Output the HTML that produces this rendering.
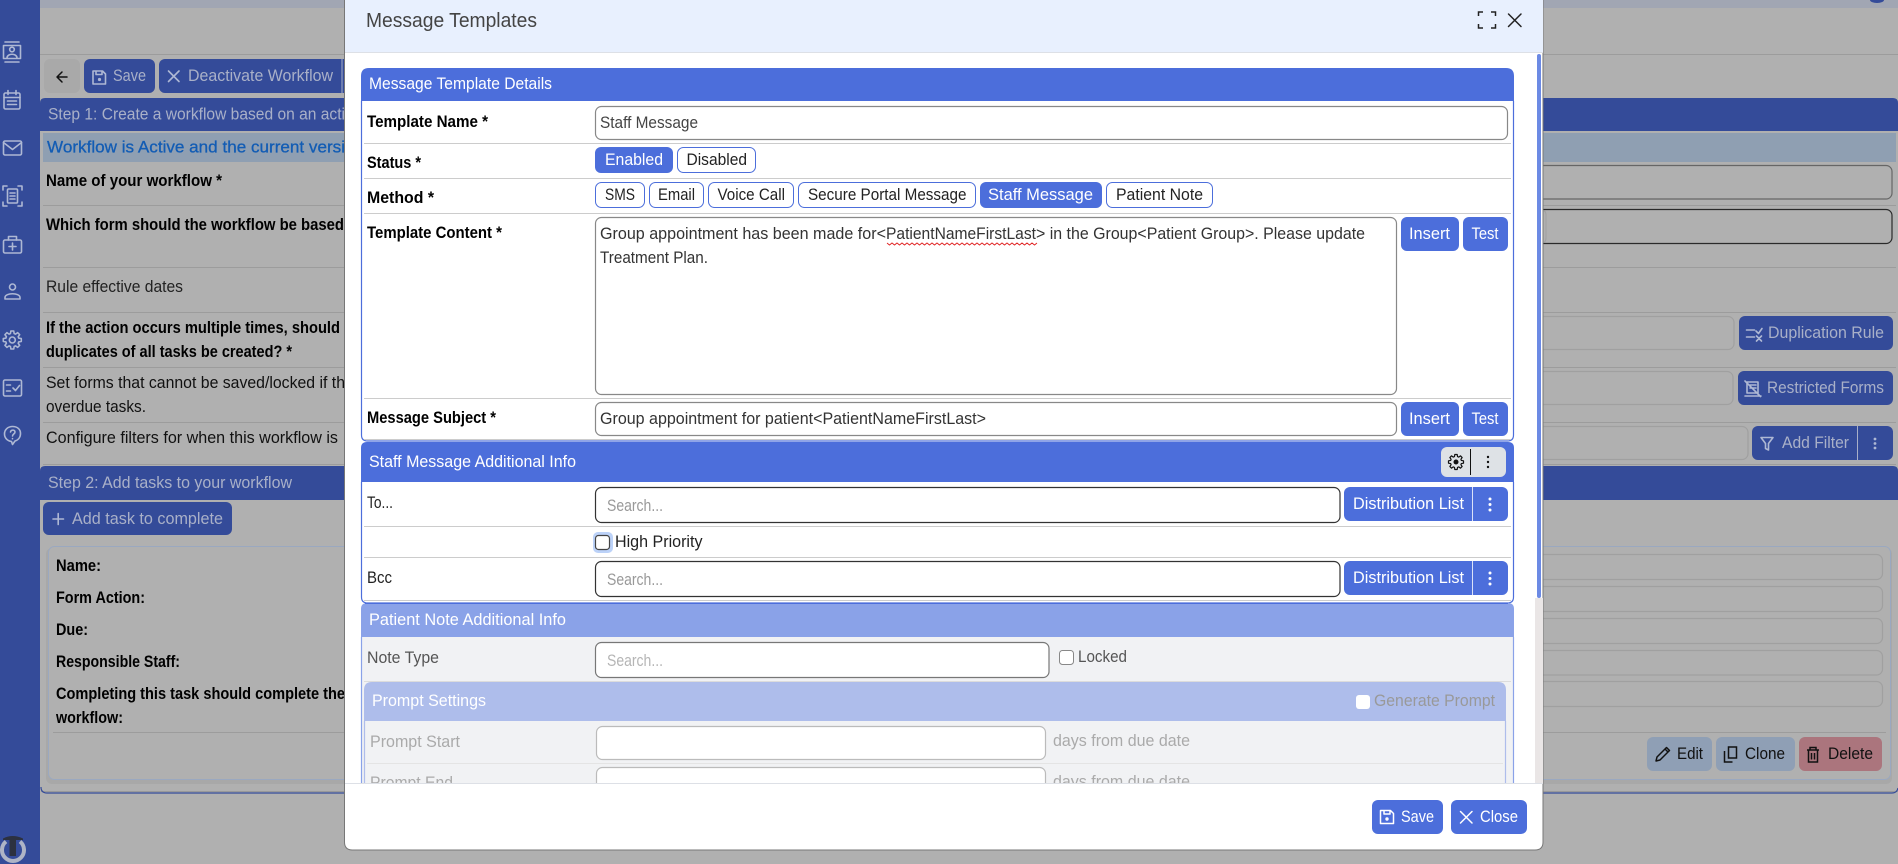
<!DOCTYPE html>
<html lang="en"><head><meta charset="utf-8"><title>Message Templates</title>
<style>
html,body{margin:0;padding:0;width:1898px;height:864px;overflow:hidden;background:#b0b0b0}
svg{display:block}
text{font-family:"Liberation Sans",Arial,sans-serif;font-size:17px;white-space:pre}
.b{font-weight:700;fill:#000}
.w{fill:#fff}
.d{fill:#a9b0c8}
.i{fill:none;stroke:#aeb8d4;stroke-width:1.6;stroke-linecap:round;stroke-linejoin:round}
.l{fill:none;stroke:#9c9c9c;stroke-width:1}
.f{fill:none;stroke:#a0a0a0;stroke-width:1.2}
.x{fill:none;stroke:#fff;stroke-width:1.5;stroke-linecap:round;stroke-linejoin:round}
</style></head><body>
<svg xmlns="http://www.w3.org/2000/svg" width="1898" height="864" viewBox="0 0 1898 864">
<defs>
<clipPath id="mb"><rect x="345" y="52" width="1190" height="731"/></clipPath>
<path id="gear" d="M5.38-1.54L7.51-1.19 7.51 1.19 5.38 1.54 4.90 2.71 6.15 4.47 4.47 6.15 2.71 4.90 1.54 5.38 1.19 7.51-1.19 7.51-1.54 5.38-2.71 4.90-4.47 6.15-6.15 4.47-4.90 2.71-5.38 1.54-7.51 1.19-7.51-1.19-5.38-1.54-4.90-2.71-6.15-4.47-4.47-6.15-2.71-4.90-1.54-5.38-1.19-7.51 1.19-7.51 1.54-5.38 2.71-4.90 4.47-6.15 6.15-4.47 4.90-2.71Z"/>
</defs>

<!-- page background -->
<rect width="1898" height="864" fill="#b0b0b0"/>
<rect width="1898" height="8" fill="#a1a6b3"/>
<path d="M1870 0a7 3 0 0 0 14 0z" fill="#344b99"/>
<path class="l" d="M40 54.5H1898"/>

<!-- sidebar -->
<rect width="40" height="864" fill="#344b99"/>
<g class="i">
<path d="M5 42h14M3.5 45.5h17v13h-17zM5 62h14"/><circle cx="12" cy="49.5" r="2.3"/><path d="M7 58c0-5 10-5 10 0"/>
<rect x="4" y="93" width="16" height="16" rx="1.5"/><path d="M4 97.5h16M8 90.5v4M16 90.5v4M7.5 101h9M7.5 104.5h9" />
<rect x="3.5" y="141" width="18" height="14" rx="1.5"/><path d="M3.5 142.5l9 7 9-7"/>
<path d="M3 190v-4h4M18 186h4v4M3 202v4h4M22 202v4h-4"/><rect x="7.5" y="189" width="10" height="14" rx="1"/><path d="M10 193h5M10 196h5M10 199h5"/>
<rect x="3.5" y="240" width="18" height="13" rx="1.5"/><path d="M8.500 240v-3.500h8v3.500M12.500 243v7M9 246.500h7"/>
<circle cx="12.500" cy="287" r="3"/><path d="M5 299v-1.500c0-5 15-5 15 0v1.500z"/>
<use href="#gear" transform="translate(12.300 340) scale(1.200)" stroke-width="1.300"/><circle cx="12.300" cy="340" r="3"/>
<rect x="3.500" y="380" width="18" height="16" rx="1.500"/><path d="M6.500 385h4M6.500 391h4M13 388l2.500 2.500 4-5"/>
<path d="M12.500 426.500c-4.500 0-8 3-8 7.500 0 4 3 7 7 7.500l1 3 2.500-3.500c3.500-1 5.500-4 5.500-7.500 0-4.500-3.500-7-8-7z"/>
<path d="M10.500 432c.5-2.500 4.500-2.500 4.500 0 0 2-2.500 2-2.500 4M12.500 438.500v.2"/>
</g>
<path d="M6 841.500a11 11 0 1 0 14 0" fill="none" stroke="#aeb4c6" stroke-width="4"/>
<path d="M3 838.500q9.500-5 20 0v1.500h-7v16h-6.500v-16H3z" fill="#2c3140"/>

<!-- top toolbar -->
<rect x="44" y="59" width="36" height="34" rx="6" fill="#a9a9a9"/>
<path d="M67 77H57.500M62 72l-5 5 5 5" fill="none" stroke="#111" stroke-width="1.500" stroke-linecap="round" stroke-linejoin="round"/>
<rect x="84" y="59" width="71" height="34" rx="6" fill="#344b99"/>
<path class="i" d="M93 71h9.500l3 3v10h-12.500zM96 71v3.500h6V71"/><circle cx="99.500" cy="79.500" r="1.600" fill="#aeb8d4" stroke="none"/>
<text class="d" x="113" y="81" textLength="33" lengthAdjust="spacingAndGlyphs">Save</text>
<rect x="159" y="59" width="200" height="34" rx="6" fill="#344b99"/>
<path class="i" d="M168.500 71l10.500 10.500M179 71l-10.500 10.500"/>
<text class="d" x="188" y="81" textLength="145" lengthAdjust="spacingAndGlyphs">Deactivate Workflow</text>
<path d="M342 59v34" stroke="#a9b0c8" stroke-width="1"/>

<!-- step 1 -->
<path d="M40 131V103q0-5 5-5H1893q5 0 5 5V131z" fill="#344b99"/>
<text class="d" x="48" y="119.500" textLength="297" lengthAdjust="spacingAndGlyphs">Step 1: Create a workflow based on an acti</text>
<rect x="43" y="133" width="1853" height="29" fill="#8f9fb2"/>
<text x="47" y="152.500" textLength="298" lengthAdjust="spacingAndGlyphs" fill="#125cb4" style="stroke:#125cb4;stroke-width:.3">Workflow is Active and the current versi</text>
<path class="l" d="M43 205.500H1896M43 267.500H1896M43 312.500H1896M43 367.500H1896M43 422.500H1896M43 464.500H1896"/>
<text class="b" x="46" y="186" textLength="176" lengthAdjust="spacingAndGlyphs">Name of your workflow *</text>
<rect x="1200" y="165.500" width="692" height="33.500" rx="6" fill="none" stroke="#666" stroke-width="1.200"/>
<text class="b" x="46" y="230" textLength="298" lengthAdjust="spacingAndGlyphs">Which form should the workflow be based</text>
<rect x="1200" y="209.500" width="692" height="34" rx="6" fill="none" stroke="#2a2a2a" stroke-width="1.200"/>
<path d="M1541 210q5 0 5 5v23q0 5-5 5" fill="none" stroke="#a0a0a0"/>
<text x="46" y="292" textLength="137" lengthAdjust="spacingAndGlyphs" fill="#222">Rule effective dates</text>
<text class="b" x="46" y="333" textLength="294" lengthAdjust="spacingAndGlyphs">If the action occurs multiple times, should</text>
<text class="b" x="46" y="357" textLength="246" lengthAdjust="spacingAndGlyphs">duplicates of all tasks be created? *</text>
<rect class="f" x="1200" y="316.500" width="534" height="33" rx="6"/>
<rect x="1739" y="316" width="154" height="34" rx="6" fill="#344b99"/>
<path class="i" d="M1746.500 330h8M1746.500 337h8M1756 331l2.500 2.500 3.500-5M1756.500 336l5 5M1761.500 336l-5 5"/>
<text class="d" x="1768" y="338" textLength="116" lengthAdjust="spacingAndGlyphs">Duplication Rule</text>
<text x="46" y="388" textLength="299" lengthAdjust="spacingAndGlyphs" fill="#111">Set forms that cannot be saved/locked if th</text>
<text x="46" y="412" textLength="100" lengthAdjust="spacingAndGlyphs" fill="#111">overdue tasks.</text>
<rect class="f" x="1200" y="371.500" width="533" height="33" rx="6"/>
<rect x="1738" y="371" width="155" height="34" rx="6" fill="#344b99"/>
<path class="i" d="M1747 382h11v11h-11zM1745 381l15.500 15.500M1745 396h16M1750 385h6M1750 388h6"/>
<text class="d" x="1767" y="393" textLength="117" lengthAdjust="spacingAndGlyphs">Restricted Forms</text>
<text x="46" y="443" textLength="292" lengthAdjust="spacingAndGlyphs" fill="#111">Configure filters for when this workflow is</text>
<rect class="f" x="1200" y="426.500" width="548" height="33" rx="6"/>
<rect x="1752" y="426" width="141" height="34" rx="6" fill="#344b99"/>
<path class="i" d="M1761 437.500h12l-4.500 6v6.500l-3-1.500v-5z"/>
<text class="d" x="1782" y="448" textLength="67" lengthAdjust="spacingAndGlyphs">Add Filter</text>
<path d="M1857.500 426v34" stroke="#a9b0c8"/>
<g fill="#aeb8d4"><circle cx="1875" cy="439" r="1.400"/><circle cx="1875" cy="443.500" r="1.400"/><circle cx="1875" cy="448" r="1.400"/></g>

<!-- step 2 -->
<path d="M40 500V471q0-5 5-5H1893q5 0 5 5V500z" fill="#344b99"/>
<text class="d" x="48" y="488" textLength="244" lengthAdjust="spacingAndGlyphs">Step 2: Add tasks to your workflow</text>
<rect x="43" y="502" width="189" height="33" rx="6" fill="#344b99"/>
<path class="i" d="M53 519h10.500M58.200 513.500v11"/>
<text class="d" x="72" y="524" textLength="151" lengthAdjust="spacingAndGlyphs">Add task to complete</text>
<rect x="46" y="548" width="1846" height="236" rx="6" fill="#a8a8a8"/>
<rect x="48.500" y="546.500" width="1842" height="233" rx="6" fill="#b0b0b0" stroke="#9aa8c0"/>
<text class="b" x="56" y="571" textLength="45" lengthAdjust="spacingAndGlyphs">Name:</text>
<text class="b" x="56" y="603" textLength="89" lengthAdjust="spacingAndGlyphs">Form Action:</text>
<text class="b" x="56" y="635" textLength="32" lengthAdjust="spacingAndGlyphs">Due:</text>
<text class="b" x="56" y="667" textLength="124" lengthAdjust="spacingAndGlyphs">Responsible Staff:</text>
<text class="b" x="56" y="699" textLength="289" lengthAdjust="spacingAndGlyphs">Completing this task should complete the</text>
<text class="b" x="56" y="723" textLength="67" lengthAdjust="spacingAndGlyphs">workflow:</text>
<g class="f"><rect x="1200" y="554.500" width="682.500" height="25" rx="6"/><rect x="1200" y="586.500" width="682.500" height="25" rx="6"/><rect x="1200" y="618.500" width="682.500" height="25" rx="6"/><rect x="1200" y="650.500" width="682.500" height="24.500" rx="6"/><rect x="1200" y="681.500" width="682.500" height="25" rx="6"/></g>
<path class="l" d="M53 732.500H1886"/>
<rect x="1647" y="737" width="65" height="34" rx="6" fill="#8f9fb5"/>
<path d="M1656 761l1-4 9.500-9.500 3 3-9.500 9.500zM1665 749l3 3" fill="none" stroke="#111" stroke-width="1.500" stroke-linejoin="round"/>
<text x="1677" y="759" textLength="26" lengthAdjust="spacingAndGlyphs" fill="#111">Edit</text>
<rect x="1716" y="737" width="79" height="34" rx="6" fill="#8f9fb5"/>
<path d="M1728.500 747h8v11h-8zM1724.500 751v11h8" fill="none" stroke="#111" stroke-width="1.500"/>
<text x="1745" y="759" textLength="40" lengthAdjust="spacingAndGlyphs" fill="#111">Clone</text>
<rect x="1799" y="737" width="83" height="34" rx="6" fill="#ab757d"/>
<path d="M1807 750h12M1810 750v-2.500h6v2.500M1808.500 750v12h9v-12M1811.500 753v6.500M1814.500 753v6.500" fill="none" stroke="#111" stroke-width="1.500"/>
<text x="1828" y="759" textLength="45" lengthAdjust="spacingAndGlyphs" fill="#111">Delete</text>
<path d="M41 791.500H1898" stroke="#999" fill="none"/>
<path d="M41 787q0 6 6 6H1892q5 0 6-5" stroke="#344b99" stroke-width="1.200" fill="none"/>

<!-- modal -->
<path d="M344.500 0V842q0 8 8 8H1535q8 0 8-8V0z" fill="#fff" stroke="#777" stroke-width="1"/>
<rect x="345" y="0" width="1198" height="52" fill="#e8f0fe"/>
<path d="M345 52.500H1543" stroke="#dde0e6"/>
<text x="366" y="27" style="font-size:20px" textLength="171" lengthAdjust="spacingAndGlyphs" fill="#444">Message Templates</text>
<path d="M1478.500 16v-4h4.500M1491 12h4.500v4M1478.500 24v4h4.500M1495.500 24v4H1491" fill="none" stroke="#222" stroke-width="1.500"/>
<path d="M1508.500 14l12.500 12.500M1521 14l-12.500 12.500" fill="none" stroke="#222" stroke-width="1.500" stroke-linecap="round"/>

<!-- scrollbar -->
<rect x="1535" y="598" width="8" height="185" fill="#eae6e6"/>
<rect x="1537" y="54" width="4" height="544" rx="2" fill="#6c8ae4"/>

<g clip-path="url(#mb)">
<!-- panel 1 -->
<path d="M361.500 101V435q0 6 6 6H1507.500q6 0 6-6V101" fill="none" stroke="#4c6edb" stroke-width="1.200"/>
<path d="M361 101V76q0-8 8-8H1506q8 0 8 8V101z" fill="#4c6edb"/>
<text class="w" x="369" y="89" textLength="183" lengthAdjust="spacingAndGlyphs">Message Template Details</text>
<path d="M364 143.500H1511M364 178.500H1511M364 213.500H1511M364 398.500H1511M364 439.500H1511" stroke="#ccc" fill="none"/>
<text class="b" x="367" y="127" textLength="121" lengthAdjust="spacingAndGlyphs">Template Name *</text>
<rect x="595.500" y="106.500" width="912" height="33" rx="6" fill="#fff" stroke="#888" stroke-width="1.200"/>
<text x="600" y="128" textLength="98" lengthAdjust="spacingAndGlyphs" fill="#444">Staff Message</text>
<text class="b" x="367" y="168" textLength="54" lengthAdjust="spacingAndGlyphs">Status *</text>
<rect x="595" y="147" width="78" height="26" rx="6" fill="#4c6edb"/>
<text class="w" x="605" y="165" textLength="58" lengthAdjust="spacingAndGlyphs">Enabled</text>
<rect x="677.500" y="147.500" width="78" height="25" rx="6" fill="#fff" stroke="#4c6edb"/>
<text x="686.500" y="165" textLength="60.500" lengthAdjust="spacingAndGlyphs" fill="#222">Disabled</text>
<text class="b" x="367" y="203" textLength="67" lengthAdjust="spacingAndGlyphs">Method *</text>
<g fill="#fff" stroke="#4c6edb">
<rect x="595.500" y="182.500" width="49" height="25" rx="6"/>
<rect x="649.500" y="182.500" width="54" height="25" rx="6"/>
<rect x="708.500" y="182.500" width="85" height="25" rx="6"/>
<rect x="798.500" y="182.500" width="177" height="25" rx="6"/>
<rect x="1106.500" y="182.500" width="106" height="25" rx="6"/>
</g>
<rect x="980" y="182" width="122" height="26" rx="6" fill="#4c6edb"/>
<g fill="#222">
<text x="605" y="200" textLength="30" lengthAdjust="spacingAndGlyphs">SMS</text>
<text x="658" y="200" textLength="37" lengthAdjust="spacingAndGlyphs">Email</text>
<text x="717.500" y="200" textLength="67.500" lengthAdjust="spacingAndGlyphs">Voice Call</text>
<text x="808" y="200" textLength="158.500" lengthAdjust="spacingAndGlyphs">Secure Portal Message</text>
<text x="1116" y="200" textLength="87" lengthAdjust="spacingAndGlyphs">Patient Note</text>
</g>
<text class="w" x="988" y="200" textLength="105" lengthAdjust="spacingAndGlyphs">Staff Message</text>
<text class="b" x="367" y="238" textLength="135" lengthAdjust="spacingAndGlyphs">Template Content *</text>
<rect x="595.500" y="217.500" width="801" height="177" rx="6" fill="#fff" stroke="#888" stroke-width="1.200"/>
<g fill="#333">
<text x="600" y="239" textLength="286" lengthAdjust="spacingAndGlyphs">Group appointment has been made for&lt;</text>
<text x="886" y="239" textLength="150" lengthAdjust="spacingAndGlyphs">PatientNameFirstLast</text>
<text x="1036" y="239" textLength="329" lengthAdjust="spacingAndGlyphs">&gt; in the Group&lt;Patient Group&gt;. Please update</text>
<text x="600" y="263" textLength="108" lengthAdjust="spacingAndGlyphs">Treatment Plan.</text>
</g>
<path d="M887 243l2.500 2 2.500-2 2.500 2 2.500-2 2.500 2 2.500-2 2.500 2 2.500-2 2.500 2 2.500-2 2.500 2 2.500-2 2.500 2 2.500-2 2.500 2 2.500-2 2.500 2 2.500-2 2.500 2 2.500-2 2.500 2 2.500-2 2.500 2 2.500-2 2.500 2 2.500-2 2.500 2 2.500-2 2.500 2 2.500-2 2.500 2 2.500-2 2.500 2 2.500-2 2.500 2 2.500-2 2.500 2 2.500-2 2.500 2 2.500-2 2.500 2 2.500-2 2.500 2 2.500-2 2.500 2 2.500-2 2.500 2 2.500-2 2.500 2 2.500-2 2.500 2 2.500-2 2.500 2 2.500-2 2.500 2 2.500-2 2.500 2 2.500-2 2.500 2 2.500-2" fill="none" stroke="#e02020" stroke-width=".9"/>
<g fill="#4c6edb"><rect x="1401" y="217" width="58" height="34" rx="6"/><rect x="1463" y="217" width="45" height="34" rx="6"/><rect x="1401" y="402" width="58" height="34" rx="6"/><rect x="1463" y="402" width="45" height="34" rx="6"/></g>
<g class="w">
<text x="1409" y="239" textLength="41" lengthAdjust="spacingAndGlyphs">Insert</text>
<text x="1471.500" y="239" textLength="27" lengthAdjust="spacingAndGlyphs">Test</text>
<text x="1409" y="424" textLength="41" lengthAdjust="spacingAndGlyphs">Insert</text>
<text x="1471.500" y="424" textLength="27" lengthAdjust="spacingAndGlyphs">Test</text>
</g>
<text class="b" x="367" y="423" textLength="129" lengthAdjust="spacingAndGlyphs">Message Subject *</text>
<rect x="595.500" y="402.500" width="801" height="33" rx="6" fill="#fff" stroke="#888" stroke-width="1.200"/>
<text x="600" y="424" textLength="386" lengthAdjust="spacingAndGlyphs" fill="#333">Group appointment for patient&lt;PatientNameFirstLast&gt;</text>

<!-- panel 2 -->
<path d="M361.500 482V597q0 6 6 6H1507.500q6 0 6-6V482" fill="#fff" stroke="#4c6edb" stroke-width="1.200"/>
<path d="M361 482V448q0-6 6-6H1508q6 0 6 6V482z" fill="#4c6edb"/>
<text class="w" x="369" y="467" textLength="207" lengthAdjust="spacingAndGlyphs">Staff Message Additional Info</text>
<rect x="1441" y="447" width="65" height="30" rx="6" fill="#dee2e6"/>
<path d="M1470.500 449v26" stroke="#111"/>
<use href="#gear" transform="translate(1456 462)" fill="none" stroke="#111" stroke-width="1.200" stroke-linejoin="round"/>
<circle cx="1456" cy="462" r="2.500" fill="#111"/>
<g fill="#111"><circle cx="1488" cy="457" r="1.200"/><circle cx="1488" cy="462" r="1.200"/><circle cx="1488" cy="467" r="1.200"/></g>
<text x="367" y="508" textLength="26" lengthAdjust="spacingAndGlyphs" fill="#222">To...</text>
<rect x="595.500" y="487.500" width="744.500" height="35" rx="6" fill="#fff" stroke="#333" stroke-width="1.200"/>
<text x="607" y="511" textLength="56" lengthAdjust="spacingAndGlyphs" fill="#999">Search...</text>
<rect x="1344" y="487" width="164" height="34" rx="6" fill="#4c6edb"/>
<path d="M1472.500 487v34" stroke="#fff" stroke-opacity=".8"/>
<text class="w" x="1353" y="509" textLength="111" lengthAdjust="spacingAndGlyphs">Distribution List</text>
<g fill="#fff"><circle cx="1490" cy="499" r="1.500"/><circle cx="1490" cy="504.500" r="1.500"/><circle cx="1490" cy="510" r="1.500"/></g>
<path d="M364 526.500H1511M364 557.500H1511M364 600.500H1511" stroke="#ccc" fill="none"/>
<rect x="593" y="532" width="20" height="21" rx="5" fill="#bcd2f8"/>
<rect x="595.500" y="535.500" width="14" height="14" rx="3" fill="#fff" stroke="#444" stroke-width="1.200"/>
<text x="615" y="547" textLength="87.500" lengthAdjust="spacingAndGlyphs" fill="#222">High Priority</text>
<text x="367" y="583" textLength="25" lengthAdjust="spacingAndGlyphs" fill="#222">Bcc</text>
<rect x="595.500" y="561.500" width="744.500" height="35" rx="6" fill="#fff" stroke="#333" stroke-width="1.200"/>
<text x="607" y="585" textLength="56" lengthAdjust="spacingAndGlyphs" fill="#999">Search...</text>
<rect x="1344" y="561" width="164" height="34" rx="6" fill="#4c6edb"/>
<path d="M1472.500 561v34" stroke="#fff" stroke-opacity=".8"/>
<text class="w" x="1353" y="583" textLength="111" lengthAdjust="spacingAndGlyphs">Distribution List</text>
<g fill="#fff"><circle cx="1490" cy="573" r="1.500"/><circle cx="1490" cy="578.500" r="1.500"/><circle cx="1490" cy="584" r="1.500"/></g>

<!-- panel 3 -->
<rect x="361" y="637" width="1153" height="150" fill="#f1f2f4"/>
<path d="M361.500 637V790M1513.500 637V790" stroke="#8aa2e8" fill="none" stroke-width="1.200"/>
<path d="M361 637V609q0-6 6-6H1508q6 0 6 6V637z" fill="#8aa2e8"/>
<path d="M365 603.500H1508" stroke="#4c6edb"/>
<text class="w" x="369" y="625" textLength="197" lengthAdjust="spacingAndGlyphs">Patient Note Additional Info</text>
<text x="367" y="663" textLength="72" lengthAdjust="spacingAndGlyphs" fill="#555">Note Type</text>
<rect x="595.500" y="642.500" width="453.500" height="35" rx="6" fill="#fff" stroke="#777" stroke-width="1.200"/>
<text x="607" y="666" textLength="56" lengthAdjust="spacingAndGlyphs" fill="#b5b5b5">Search...</text>
<rect x="1059.500" y="650.500" width="14" height="14" rx="3" fill="#fff" stroke="#888"/>
<text x="1078" y="662" textLength="49" lengthAdjust="spacingAndGlyphs" fill="#555">Locked</text>
<path d="M364 681.500H1511" stroke="#dcdcdc"/>
<path d="M364.500 721V800M1505.500 721V800" stroke="#aebdeb" fill="none" stroke-width="1.200"/>
<path d="M364 721V690q0-8 8-8H1498q8 0 8 8V721z" fill="#aebdeb"/>
<text class="w" x="372" y="706" textLength="114" lengthAdjust="spacingAndGlyphs">Prompt Settings</text>
<rect x="1356" y="695" width="14" height="14" rx="3" fill="#fff"/>
<text x="1374" y="706" textLength="121" lengthAdjust="spacingAndGlyphs" fill="#999">Generate Prompt</text>
<text x="370" y="747" textLength="90" lengthAdjust="spacingAndGlyphs" fill="#aaa">Prompt Start</text>
<rect x="596.500" y="726.500" width="449" height="33" rx="6" fill="#fff" stroke="#bbb" stroke-width="1.200"/>
<text x="1053" y="746" textLength="137" lengthAdjust="spacingAndGlyphs" fill="#aaa">days from due date</text>
<path d="M367 763.500H1503" stroke="#e4e4e4"/>
<text x="370" y="788" textLength="83" lengthAdjust="spacingAndGlyphs" fill="#aaa">Prompt End</text>
<rect x="596.500" y="767.500" width="449" height="33" rx="6" fill="#fff" stroke="#bbb" stroke-width="1.200"/>
<text x="1053" y="787" textLength="137" lengthAdjust="spacingAndGlyphs" fill="#aaa">days from due date</text>
</g>

<!-- footer -->
<path d="M345 783.500H1543" stroke="#dde0e6"/>
<rect x="1372" y="800" width="71" height="34" rx="6" fill="#4c6edb"/>
<path class="x" d="M1380.500 810.500h10l3 3v10h-13zM1384 810.500v3.500h6v-3.500"/><circle cx="1387" cy="819" r="1.700" fill="#fff"/>
<text class="w" x="1401" y="822" textLength="33" lengthAdjust="spacingAndGlyphs">Save</text>
<rect x="1451" y="800" width="76" height="34" rx="6" fill="#4c6edb"/>
<path class="x" d="M1460.500 811.500l11.500 11.500M1472 811.500l-11.500 11.500"/>
<text class="w" x="1480" y="822" textLength="38" lengthAdjust="spacingAndGlyphs">Close</text>
</svg>
</body></html>
